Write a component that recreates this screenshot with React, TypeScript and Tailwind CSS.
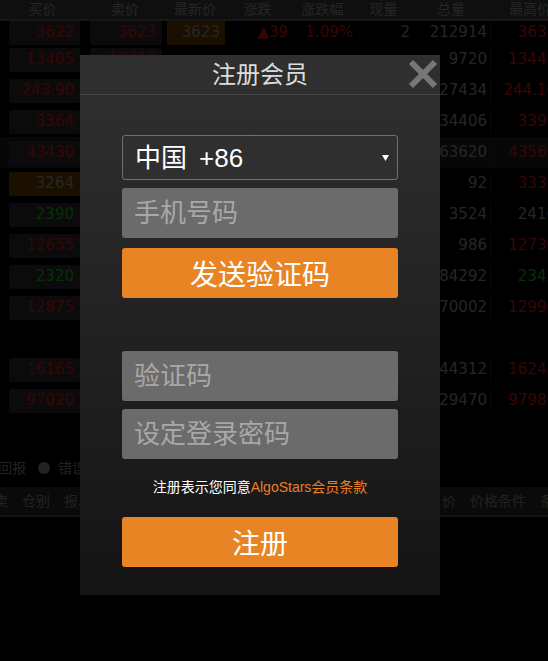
import React from "react";

type Tone = "red" | "green" | "gray";

// table is drawn in its real colours; the modal backdrop dims it
const toneClass: Record<Tone, string> = {
  red: "text-[#f01c1c]",
  green: "text-[#22d022]",
  gray: "text-[#aaaaaa]",
};

type Row = {
  bid: string;
  ask: string;
  last: string;
  chg: string;
  pct: string;
  vol: string;
  total: string;
  high: string;
  bidTone: Tone;
  highTone: Tone;
  lastHot?: boolean;
  bidHot?: boolean;
  band?: boolean;
};

const rows: Row[] = [
  { bid: "13405", ask: "13410", last: "", chg: "", pct: "", vol: "", total: "9720", high: "13445", bidTone: "red", highTone: "red" },
  { bid: "243.90", ask: "244.00", last: "", chg: "", pct: "", vol: "", total: "27434", high: "244.10", bidTone: "red", highTone: "red" },
  { bid: "3364", ask: "3365", last: "", chg: "", pct: "", vol: "", total: "34406", high: "3392", bidTone: "red", highTone: "red" },
  { bid: "43430", ask: "43440", last: "", chg: "", pct: "", vol: "", total: "63620", high: "43560", bidTone: "red", highTone: "red", band: true },
  { bid: "3264", ask: "3265", last: "", chg: "", pct: "", vol: "", total: "92", high: "3331", bidTone: "gray", highTone: "red", bidHot: true },
  { bid: "2390", ask: "2391", last: "", chg: "", pct: "", vol: "", total: "3524", high: "2416", bidTone: "green", highTone: "gray" },
  { bid: "12655", ask: "12660", last: "", chg: "", pct: "", vol: "", total: "986", high: "12730", bidTone: "red", highTone: "red" },
  { bid: "2320", ask: "2321", last: "", chg: "", pct: "", vol: "", total: "84292", high: "2345", bidTone: "green", highTone: "green" },
  { bid: "12875", ask: "12880", last: "", chg: "", pct: "", vol: "", total: "70002", high: "12990", bidTone: "red", highTone: "red" },
  { bid: "", ask: "", last: "", chg: "", pct: "", vol: "", total: "", high: "", bidTone: "red", highTone: "red" },
  { bid: "16165", ask: "16170", last: "", chg: "", pct: "", vol: "", total: "44312", high: "16245", bidTone: "red", highTone: "red" },
  { bid: "97020", ask: "97030", last: "", chg: "", pct: "", vol: "", total: "29470", high: "97980", bidTone: "red", highTone: "red" },
];

const headers = ["买价", "卖价", "最新价", "涨跌", "涨跌幅", "现量", "总量", "最高价"];
const colW = ["w-[85px]", "w-[80px]", "w-[60px]", "w-[65px]", "w-[65px]", "w-[57px]", "w-[78px]", "w-[80px]"];

function QuoteRow({ r, first }: { r: Row; first?: boolean }) {
  return (
    <div className={`flex items-center text-[15px] ${first ? "h-[23px]" : "h-[31px]"} ${r.band ? "bg-[#222222]" : ""}`}>
      <div className="w-[85px] shrink-0 pl-[9px] pr-[5px]">
        <div
          className={`flex h-[24px] items-center justify-end rounded-[2px] pr-[6px] ${
            r.bid ? (r.bidHot ? "bg-[#7a4600]" : "bg-[#333333]") : ""
          } ${toneClass[r.bidTone]}`}
        >
          {r.bid}
        </div>
      </div>
      <div className="w-[80px] shrink-0 pl-[5px] pr-[3px]">
        <div
          className={`flex h-[24px] items-center justify-end rounded-[2px] pr-[6px] ${
            r.ask ? "bg-[#333333]" : ""
          } text-[#f01c1c]`}
        >
          {r.ask}
        </div>
      </div>
      <div className="w-[60px] shrink-0 pl-[2px]">
        <div
          className={`flex h-[24px] items-center justify-end pr-[5px] ${
            r.lastHot ? "bg-[#7a4600]" : ""
          } text-[#aaaaaa]`}
        >
          {r.last}
        </div>
      </div>
      <div className="w-[65px] shrink-0 pr-[2px] text-right text-[#f01c1c]">{r.chg}</div>
      <div className="w-[65px] shrink-0 pr-[2px] text-right text-[#f01c1c]">{r.pct}</div>
      <div className="w-[57px] shrink-0 pr-[2px] text-right text-[#aaaaaa]">{r.vol}</div>
      <div className="w-[78px] shrink-0 pr-[3px] text-right text-[#aaaaaa]">{r.total}</div>
      <div className={`w-[80px] shrink-0 whitespace-nowrap border-l border-[#2a2a2a] pr-[14px] text-right ${toneClass[r.highTone]}`}>
        {r.high}
      </div>
    </div>
  );
}

function QuoteTable() {
  return (
    <div className="font-['DejaVu_Sans','Noto_Sans_CJK_SC',sans-serif]">
      {/* header */}
      <div className="flex h-[21px] items-center border-b-2 border-[#6a6a6a] bg-[#444444] text-[14px] text-[#aaaaaa]">
        {headers.map((h, i) => (
          <div key={h} className={`${colW[i]} shrink-0 text-center`}>
            {h}
          </div>
        ))}
      </div>

      <QuoteRow
        first
        r={{ bid: "3622", ask: "3623", last: "3623", chg: "▲39", pct: "1.09%", vol: "2", total: "212914", high: "3635", bidTone: "red", highTone: "red", lastHot: true }}
      />
      {rows.map((r, idx) => (
        <QuoteRow key={idx} r={r} />
      ))}

      <div className="h-[42px]" />

      {/* status line */}
      <div className="flex h-[20px] items-center text-[14px] text-[#999999]">
        <span className="-ml-[2px]">回报</span>
        <span className="ml-[12px] mr-[8px] inline-block size-[12px] rounded-full bg-[#999999]" />
        <span>错误</span>
      </div>

      <div className="h-[9px]" />

      {/* tab bar */}
      <div className="flex h-[30px] items-center justify-between border-b-2 border-[#585858] bg-[#303030] text-[14px] text-[#999999]">
        <div className="-ml-[6px] flex gap-[14px]">
          <span>卖</span>
          <span>仓别</span>
          <span>报单</span>
        </div>
        <div className="-mr-[6px] flex gap-[14px]">
          <span>价</span>
          <span>价格条件</span>
          <span>条</span>
        </div>
      </div>
    </div>
  );
}

function RegisterModal() {
  return (
    <div className="absolute left-[80px] top-[55px] flex h-[540px] w-[360px] flex-col bg-gradient-to-b from-[#303030] via-[#222222] to-[#141414] font-['Liberation_Sans','Noto_Sans_CJK_SC',sans-serif]">
      <div className="relative flex h-[40px] shrink-0 items-center justify-center border-b border-[#474747] bg-[#2f2f2f]">
        <span className="text-[24px] text-[#dcdcdc]">注册会员</span>
        <button className="absolute right-[2px] top-[4px]" aria-label="close">
          <svg width="30" height="30" viewBox="0 0 30 30">
            <path d="M3 3 L27 27 M27 3 L3 27" stroke="#777" strokeWidth="6" />
          </svg>
        </button>
      </div>

      <div className="flex flex-col px-[42px] pt-[40px]">
        <div className="flex h-[45px] items-center justify-between rounded-[3px] border border-[#707070] bg-[#2f2f2f] pl-[12px] pr-[8px]">
          <span className="text-[26px] leading-none text-white">
            中国<span className="ml-[12px]">+86</span>
          </span>
          <svg width="7" height="6" viewBox="0 0 7 6">
            <path d="M0 0 H7 L3.5 6 Z" fill="#fff" />
          </svg>
        </div>

        <div className="mt-[8px] flex h-[50px] items-center rounded-[3px] bg-[#6b6b6b] pl-[12px] text-[26px] text-[#a8a8a8]">
          手机号码
        </div>

        <button className="mt-[10px] flex h-[50px] items-center justify-center rounded-[3px] bg-[#e98425] pt-[5px] text-[28px] text-white">
          发送验证码
        </button>

        <div className="mt-[53px] flex h-[50px] items-center rounded-[3px] bg-[#6b6b6b] pl-[12px] text-[26px] text-[#a8a8a8]">
          验证码
        </div>

        <div className="mt-[8px] flex h-[50px] items-center rounded-[3px] bg-[#6b6b6b] pl-[12px] text-[26px] text-[#a8a8a8]">
          设定登录密码
        </div>

        <p className="mt-[18px] text-center text-[14px] leading-[20px] text-white">
          注册表示您同意<span className="text-[#ef7e22]">AlgoStars会员条款</span>
        </p>

        <button className="mt-[20px] flex h-[50px] items-center justify-center rounded-[3px] bg-[#e98425] pt-[5px] text-[28px] text-white">
          注册
        </button>
      </div>
    </div>
  );
}

export default function App() {
  return (
    <div className="relative h-[661px] w-[548px] overflow-hidden bg-black">
      <QuoteTable />
      {/* backdrop */}
      <div className="absolute inset-0 bg-black/[0.78]" />
      <RegisterModal />
    </div>
  );
}
